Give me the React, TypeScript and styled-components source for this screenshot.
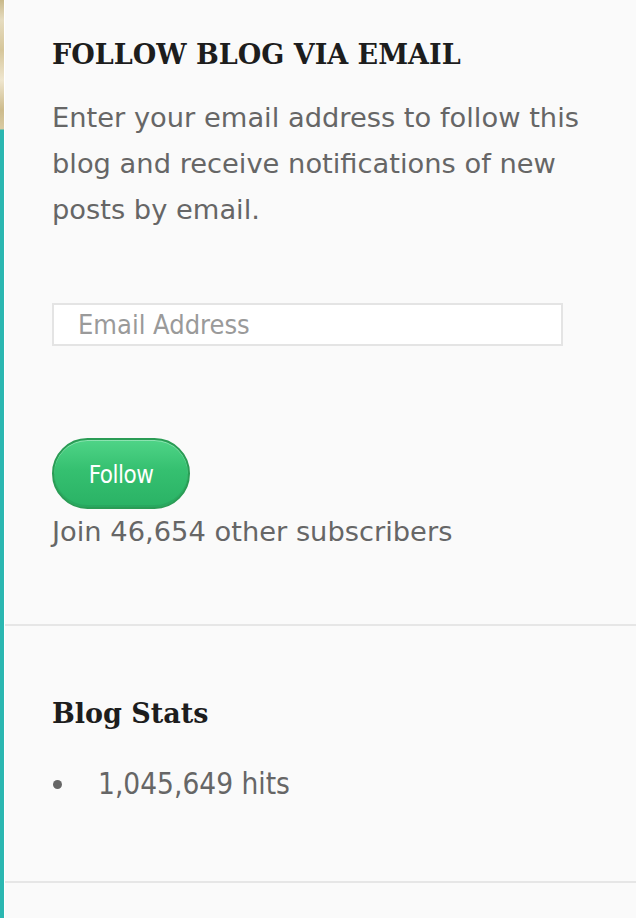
import React from 'react'
import styled, { createGlobalStyle } from 'styled-components'

const GlobalStyle = createGlobalStyle`
  html, body {
    margin: 0;
    padding: 0;
    background: #fafafa;
  }
`

const Page = styled.div`
  display: flex;
  min-height: 918px;
  width: 636px;
  overflow: hidden;
`

const Edge = styled.div`
  width: 4px;
  flex-shrink: 0;
  background: linear-gradient(
    to bottom,
    #c9b98a 0px,
    #e6dcc0 20px,
    #d6c69a 50px,
    #efe6cf 80px,
    #cdbb8c 110px,
    #d9cba3 129px,
    #2bb7b1 130px,
    #2bb7b1 100%
  );
`

const Sidebar = styled.div`
  flex: 1;
  border-left: 1px solid #fff;
  background: #fafafa;
`

const Widget = styled.section`
  padding: 0 0 0 47px;
  border-bottom: 2px solid #e6e6e6;
`

const Title = styled.h2<{ $upper?: boolean }>`
  margin: 0;
  font-family: 'DejaVu Serif', 'Liberation Serif', serif;
  font-weight: bold;
  color: #1d1d1d;
  font-size: 27px;
  text-transform: ${(p) => (p.$upper ? 'uppercase' : 'none')};
  line-height: 32px;
`

const Text = styled.p`
  margin: 0;
  font-family: 'DejaVu Sans', Verdana, sans-serif;
  font-size: 27.3px;
  line-height: 46px;
  color: #666;
  width: 545px;
`

const EmailInput = styled.input`
  display: block;
  box-sizing: border-box;
  width: 511px;
  height: 43px;
  margin: 0;
  padding: 0 24px;
  border: 2px solid #e4e4e4;
  background: #fff;
  font-family: 'DejaVu Sans Condensed', 'DejaVu Sans', sans-serif;
  font-size: 27px;
  color: #444;
  outline: none;

  &::placeholder {
    color: #9a9a9a;
  }
`

const FollowButton = styled.button`
  display: block;
  box-sizing: border-box;
  width: 138px;
  height: 71px;
  margin: 0;
  padding: 2px 0 0;
  border: 2px solid #2a9c55;
  border-radius: 36px;
  background: linear-gradient(to bottom, #4fd487 0%, #35c070 45%, #2ab265 100%);
  box-shadow: inset 0 1px 0 rgba(255, 255, 255, 0.35), inset 0 -2px 0 rgba(0, 0, 0, 0.06);
  color: #fff;
  font-family: 'DejaVu Sans Condensed', 'DejaVu Sans', sans-serif;
  font-size: 24px;
  letter-spacing: -0.5px;
  cursor: pointer;
`

const StatsList = styled.ul`
  margin: 0;
  padding: 0;
  list-style: none;
`

const StatsItem = styled.li`
  display: flex;
  align-items: center;
  gap: 36px;
  font-family: 'DejaVu Sans Condensed', 'DejaVu Sans', sans-serif;
  font-size: 29.5px;
  line-height: 46px;
  color: #666;

  &::before {
    content: '';
    width: 9px;
    height: 9px;
    margin-left: 1px;
    border-radius: 50%;
    background: #666;
  }
`

const Spacer = styled.div<{ $h: number }>`
  height: ${(p) => p.$h}px;
`

export default function App() {
  return (
    <>
      <GlobalStyle />
      <Page>
        <Edge />
        <Sidebar>
          <Widget>
            <Spacer $h={39} />
            <Title $upper>Follow Blog via Email</Title>
            <Spacer $h={24} />
            <Text>Enter your email address to follow this blog and receive notifications of new posts by email.</Text>
            <Spacer $h={70} />
            <EmailInput type="email" placeholder="Email Address" />
            <Spacer $h={92} />
            <FollowButton>Follow</FollowButton>
            <Text>Join 46,654 other subscribers</Text>
            <Spacer $h={69} />
          </Widget>
          <Widget>
            <Spacer $h={72} />
            <Title>Blog Stats</Title>
            <Spacer $h={31} />
            <StatsList>
              <StatsItem>1,045,649 hits</StatsItem>
            </StatsList>
            <Spacer $h={74} />
          </Widget>
        </Sidebar>
      </Page>
    </>
  )
}
